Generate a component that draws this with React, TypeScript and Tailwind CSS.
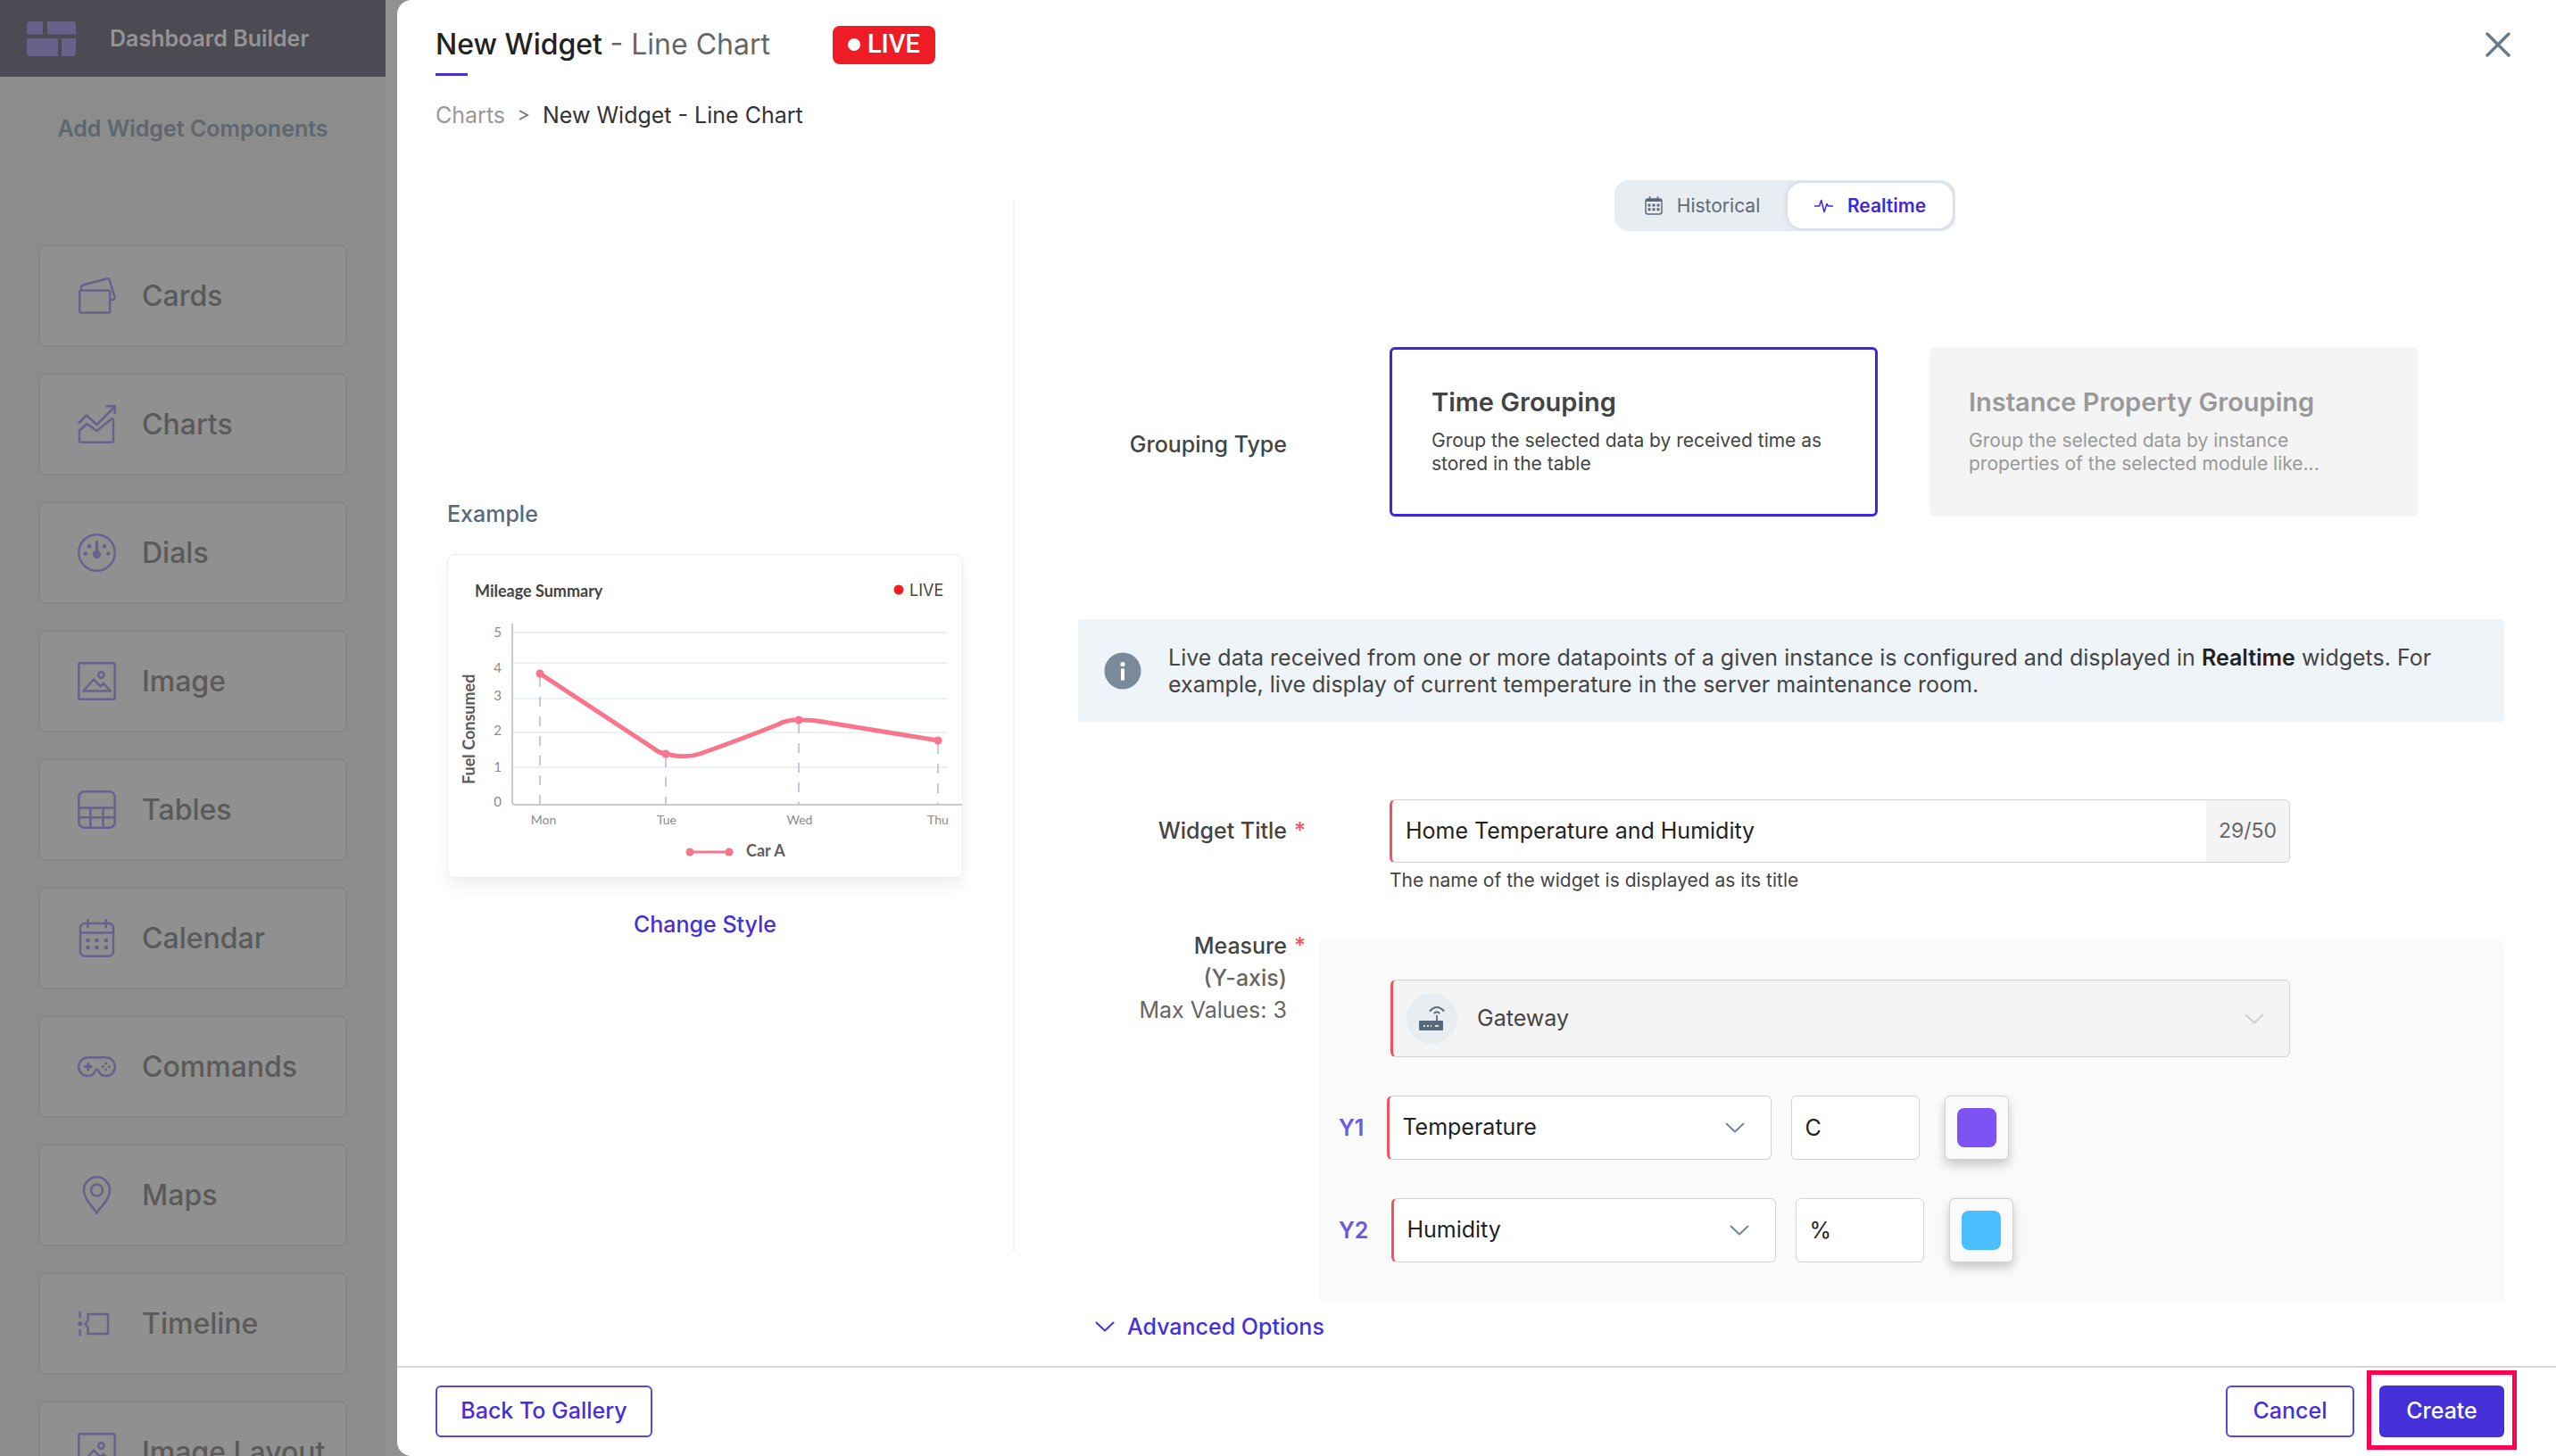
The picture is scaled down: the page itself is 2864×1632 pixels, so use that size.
import { useState } from 'react';
import type { ReactNode } from 'react';
import clsx from 'clsx';

interface WidgetComponent {
  name: string;
  icon: ReactNode;
}

const imageIcon = (
  <>
    <rect x="1.3" y="1.3" width="40.4" height="40.4" rx="1.5" />
    <circle cx="26.3" cy="14.5" r="3.2" />
    <path d="M6.500 32.500L18 19.500l7.500 7.800L29 24l8 8.500z" />
  </>
);

const widgetComponents: WidgetComponent[] = [
  {
    name: 'Cards',
    icon: (
      <>
        <rect x="2.200" y="15.500" width="34" height="25" rx="2" />
        <path d="M4 15.500v-4.300q0-1.200 1.200-1.500L33.500 2.300q1.700-.4 2 1.200l6 19.500q.3 2-1.500 2.800L36.500 26" />
      </>
    ),
  },
  {
    name: 'Charts',
    icon: (
      <>
        <path d="M1.500 20L10 11.500 21.500 22 41 2.500" />
        <path d="M32.500 1.300h9.200V9" />
        <path d="M2 28.500L10.500 21l11 8L38 15.500q2-1 2 1v24q0 1.200-1.200 1.200H3.200Q2 41.700 2 40.500z" />
      </>
    ),
  },
  {
    name: 'Dials',
    icon: (
      <>
        <circle cx="21.500" cy="21.500" r="20.200" />
        <path d="M21.500 9v12" strokeWidth="3.200" />
        <g fill="currentColor" stroke="none">
          <circle cx="21.500" cy="23.500" r="4.700" />
          <circle cx="8.700" cy="22.500" r="2.200" />
          <circle cx="13" cy="14.300" r="2.200" />
          <circle cx="30" cy="14.300" r="2.200" />
          <circle cx="34.300" cy="22.500" r="2.200" />
        </g>
      </>
    ),
  },
  { name: 'Image', icon: imageIcon },
  {
    name: 'Tables',
    icon: (
      <>
        <rect x="1.300" y="1.300" width="40.400" height="40.400" rx="6" />
        <path d="M1.300 19.500h40.400M1.300 30.300h40.400M14.300 19.500v22M28.500 19.500v22" />
      </>
    ),
  },
  {
    name: 'Calendar',
    icon: (
      <>
        <rect x="3" y="5" width="37" height="36.700" rx="5" />
        <path d="M3 15.500h37M11.400 1.300v8M31.800 1.300v8" />
        <g fill="currentColor" stroke="none">
          <circle cx="11.400" cy="24" r="2.300" />
          <circle cx="21.500" cy="24" r="2.300" />
          <circle cx="31.800" cy="24" r="2.300" />
          <circle cx="11.400" cy="32" r="2.300" />
          <circle cx="21.500" cy="32" r="2.300" />
          <circle cx="31.800" cy="32" r="2.300" />
        </g>
      </>
    ),
  },
  {
    name: 'Commands',
    icon: (
      <>
        <path d="M11.500 11.200h20a10.300 10.300 0 0 1 0 20.900c-6 0-7.300-3.800-8.500-6.300-1-1.800-2-1.800-3 0-1.200 2.500-2.500 6.300-8.500 6.300a10.300 10.300 0 0 1 0-20.900z" />
        <path d="M8.500 21.500h6.600M11.800 18.200v6.600" strokeWidth="3" />
        <g fill="currentColor" stroke="none">
          <circle cx="31.800" cy="18" r="1.500" />
          <circle cx="31.800" cy="25" r="1.500" />
          <circle cx="28.300" cy="21.500" r="1.500" />
          <circle cx="35.300" cy="21.500" r="1.500" />
        </g>
      </>
    ),
  },
  {
    name: 'Maps',
    icon: (
      <>
        <path d="M21.500 41.700C17.500 34.500 7 27 7 16a14.500 14.700 0 0 1 29 0c0 11-10.500 18.500-14.500 25.700z" />
        <circle cx="21.500" cy="16" r="6.500" />
      </>
    ),
  },
  {
    name: 'Timeline',
    icon: (
      <>
        <path d="M2.700 9v5.500M2.700 29v5.500M11.500 11H34v22H11.500v-7L8.500 22l3-4z" />
        <circle cx="2.700" cy="21.700" r="2.500" fill="currentColor" stroke="none" />
      </>
    ),
  },
  { name: 'Image Layout', icon: imageIcon },
];

const Chevron = ({ className }: { className?: string }) => (
  <svg
    viewBox="0 0 22 12"
    className={clsx('h-3 w-[22px]', className)}
    fill="none"
    stroke="currentColor"
    strokeWidth="2"
    strokeLinecap="round"
    strokeLinejoin="round"
  >
    <path d="M1.500 1.500L11 10.500l9.500-9" />
  </svg>
);

const Sidebar = () => (
  <aside className="flex w-[432px] shrink-0 flex-col overflow-hidden bg-[#8c8c8c]">
    <div className="flex h-[86px] shrink-0 items-center gap-[38px] bg-[#4c4b54] px-[30px]">
      <svg viewBox="0 0 55 39" className="h-[39px] w-[55px]" fill="#68618b">
        <path d="M4 0h14v14.500H0V4q0-4 4-4z" />
        <path d="M23 0h28q4 0 4 4v10.500H23z" />
        <path d="M0 19h35v20H4q-4 0-4-4z" />
        <path d="M39 19h16v16q0 4-4 4H39z" />
      </svg>
      <span className="text-[25px] leading-8 font-semibold text-[#949494]">Dashboard Builder</span>
    </div>
    <h2 className="mt-[42px] shrink-0 text-center text-[25px] leading-8 font-semibold text-[#60666d]">
      Add Widget Components
    </h2>
    <ul className="mt-[114px] flex flex-col gap-[29px] px-[43px]">
      {widgetComponents.map(({ name, icon }) => (
        <li
          key={name}
          className="flex h-[115px] shrink-0 items-center gap-[29px] rounded-lg border-2 border-[#858585] bg-[#909090] pl-[42px] whitespace-nowrap"
        >
          <svg
            viewBox="0 0 43 43"
            className="size-[43px] shrink-0 text-[#69618d]"
            fill="none"
            stroke="currentColor"
            strokeWidth="2.500"
            strokeLinecap="round"
            strokeLinejoin="round"
          >
            {icon}
          </svg>
          <span className="text-[32px] leading-10 font-medium text-[#5a5a5a]">{name}</span>
        </li>
      ))}
    </ul>
  </aside>
);

const gridLines = [87, 121, 161, 199, 238];
const yLabels = [
  { text: '5', y: 92 },
  { text: '4', y: 132 },
  { text: '3', y: 163 },
  { text: '2', y: 202 },
  { text: '1', y: 243 },
  { text: '0', y: 282 },
];
const points = [
  { day: 'Mon', x: 103, y: 133, labelX: 107 },
  { day: 'Tue', x: 244, y: 223, labelX: 245 },
  { day: 'Wed', x: 393, y: 185, labelX: 394 },
  { day: 'Thu', x: 549, y: 208, labelX: 549 },
];

const MileageChart = () => (
  <svg viewBox="0 0 576 361" className="w-full font-[Lato,sans-serif]">
    <text x="30" y="47" fontSize="18" fontWeight="700" fill="#444">
      Mileage Summary
    </text>
    <circle cx="505" cy="39" r="5.500" fill="#ee1c25" />
    <text x="517" y="46" fontSize="18" fill="#444" className="font-[Inter,sans-serif]">
      LIVE
    </text>
    {gridLines.map((y) => (
      <path key={y} d={`M73 ${y}h487`} stroke="#ecf1f5" strokeWidth="2" />
    ))}
    <path d="M72 77v200q0 3 3 3h501" fill="none" stroke="#c3cad8" strokeWidth="2" />
    {yLabels.map(({ text, y }) => (
      <text key={text} x="60" y={y} fontSize="15" textAnchor="end" fill="#8c8c8c">
        {text}
      </text>
    ))}
    {points.map(({ day, x, y, labelX }) => (
      <g key={day}>
        <path d={`M${x} ${y + 4}V280`} stroke="#c3cad8" strokeWidth="2" strokeDasharray="11 11" />
        <circle cx={x} cy={y} r="4.500" fill="#f8758b" />
        <text x={labelX} y="302" fontSize="14" textAnchor="middle" fill="#8c8c8c">
          {day}
        </text>
      </g>
    ))}
    <path
      d="M103 133L229 216q8 7 20 8 18 4 33-1 40-14 88-33 10-6 28-5 12 0 28 3L549 208"
      fill="none"
      stroke="#f8758b"
      strokeWidth="5"
      strokeLinecap="round"
    />
    <text x="-257" y="30" fontSize="18" fontWeight="700" fill="#5a5a5a" transform="rotate(-90)">
      Fuel Consumed
    </text>
    <path d="M271 333h44" stroke="#f8758b" strokeWidth="3" />
    <circle cx="271" cy="333" r="4.500" fill="#f8758b" />
    <circle cx="315" cy="333" r="4.500" fill="#f8758b" />
    <text x="334" y="338" fontSize="18" fontWeight="700" fill="#5f5f5f">
      Car A
    </text>
  </svg>
);

const Example = () => (
  <section className="mt-20 mb-[129px] flex w-[692px] shrink-0 flex-col justify-center border-r-2 border-[#efefef] pr-14 pb-4 pl-14">
    <h2 className="text-[25px] leading-8 font-medium text-[#5a6877]">Example</h2>
    <div className="mt-[29px] overflow-hidden rounded-lg border border-[#e9eef4] bg-white shadow-[0_10px_16px_rgba(0,0,0,0.06)]">
      <MileageChart />
    </div>
    <a href="#style" className="mt-9 self-center text-[25px] leading-8 font-medium text-[#4630d9]">
      Change Style
    </a>
  </section>
);

const ModeToggle = () => {
  const [mode, setMode] = useState('Realtime');
  const base = 'flex h-[51px] cursor-pointer items-center justify-center gap-4 rounded-2xl text-[21px] leading-7';
  const active = 'bg-white font-semibold text-[#4226dc] shadow-[0_0_6px_rgba(120,140,180,0.35)]';
  return (
    <div className="mr-3.5 flex self-center overflow-hidden rounded-2xl bg-[#e8edf2] p-[3px]">
      <button
        type="button"
        aria-pressed={mode === 'Historical'}
        onClick={() => setMode('Historical')}
        className={clsx(base, 'w-[191px]', mode === 'Historical' ? active : 'text-[#5c6a7a]')}
      >
        <svg viewBox="0 0 20 21" className="h-[21px] w-5" fill="none" stroke="currentColor" strokeWidth="1.500">
          <rect x="1" y="3" width="18" height="17" rx="2.500" />
          <path d="M1.500 4.500h17" strokeWidth="3" />
          <path d="M5.500 0v3M14.500 0v3" />
          <path d="M3.500 10h13M3.500 14.700h13" strokeWidth="3" strokeDasharray="3 2" />
        </svg>
        Historical
      </button>
      <button
        type="button"
        aria-pressed={mode === 'Realtime'}
        onClick={() => setMode('Realtime')}
        className={clsx(base, 'w-[185px]', mode === 'Realtime' ? active : 'text-[#5c6a7a]')}
      >
        <svg viewBox="0 0 21 16" className="h-4 w-[21px]" fill="none" stroke="currentColor" strokeWidth="1.500" strokeLinejoin="round">
          <path d="M0 8h5.500L7.700 1.500 11 14.500 14 5.500 15.500 8H21" />
        </svg>
        Realtime
      </button>
    </div>
  );
};

const Required = () => <span className="inline-block w-9 pl-2 text-left font-medium text-[#f5525e]">*</span>;

interface SeriesRowProps {
  label: string;
  value: string;
  unit: string;
  swatch: string;
}

const SeriesRow: React.FC<SeriesRowProps> = ({ label, value, unit, swatch }) => (
  <div className="flex items-center pl-[22px]">
    <label htmlFor={label} className="text-[25px] leading-8 font-semibold text-[#6b59e2]">
      {label}
    </label>
    <div className="relative ml-[26px]">
      <select
        id={label}
        defaultValue={value}
        className="h-[72px] w-[431px] appearance-none rounded-md border border-l-[3px] border-[#d3d3d3] border-l-[#f5525e] bg-white pl-[14px] text-[25px] text-[#222]"
      >
        <option>{value}</option>
      </select>
      <Chevron className="pointer-events-none absolute top-[30px] right-[30px] text-[#74869a]" />
    </div>
    <input
      aria-label={`${label} unit`}
      defaultValue={unit}
      className="ml-[22px] h-[72px] w-36 rounded-md border border-[#d3d3d3] bg-white px-[14px] text-[25px] text-[#222]"
    />
    <button
      type="button"
      aria-label={`${label} colour`}
      className="ml-7 flex size-[72px] items-center justify-center rounded-md border border-[#d0d0d0] bg-[#fafafa] shadow-[0_6px_12px_rgba(0,0,0,0.2)]"
    >
      <span className={clsx('size-11 rounded-lg', swatch)} />
    </button>
  </div>
);

const WidgetForm = () => (
  <form className="flex min-w-0 flex-1 flex-col pt-[57px] pr-[58px] pl-[71px]">
    <ModeToggle />

    {/* Grouping */}
    <div className="mt-[130px] flex">
      <span className="w-[270px] shrink-0 pt-[93px] pr-9 text-right text-[25px] leading-8 font-medium text-[#444]">
        Grouping Type
      </span>
      <div className="flex gap-[58px] pl-[79px]">
        <button
          type="button"
          className="flex h-[190px] w-[547px] flex-col items-start rounded-md border-3 border-[#3f26dc] px-11 pt-[41px] text-left text-[#444]"
        >
          <span className="text-[29px] leading-9 font-semibold">Time Grouping</span>
          <span className="mt-3 text-[21px] leading-[26px]">
            Group the selected data by received time as stored in the table
          </span>
        </button>
        <button
          type="button"
          className="flex h-[190px] w-[547px] flex-col items-start rounded-md bg-[#f4f4f4] px-11 pt-11 text-left text-[#999]"
        >
          <span className="text-[29px] leading-9 font-semibold">Instance Property Grouping</span>
          <span className="mt-3 text-[21px] leading-[26px]">
            Group the selected data by instance properties of the selected module like...
          </span>
        </button>
      </div>
    </div>

    {/* Info banner */}
    <div className="mt-[115px] flex h-[115px] shrink-0 items-center gap-[30px] rounded-sm bg-[#eff4f9] pr-12 pl-[29px]">
      <svg viewBox="0 0 42 42" className="size-[42px] shrink-0">
        <circle cx="21" cy="21" r="20.500" fill="#7b8a9b" />
        <circle cx="21" cy="13.500" r="2.600" fill="#fff" />
        <path d="M21 18.500v13" stroke="#fff" strokeWidth="4" />
      </svg>
      <p className="text-[25px] leading-[30px] text-[#444]">
        Live data received from one or more datapoints of a given instance is configured and displayed in{' '}
        <b className="font-semibold text-[#222]">Realtime</b> widgets. For example, live display of current temperature
        in the server maintenance room.
      </p>
    </div>

    {/* Title */}
    <div className="mt-[87px] flex">
      <label
        htmlFor="title"
        className="w-[270px] shrink-0 pt-[19px] text-right text-[25px] leading-8 font-medium text-[#444]"
      >
        Widget Title
        <Required />
      </label>
      <div className="pl-[79px]">
        <div className="flex h-[71px] w-[1009px] overflow-hidden rounded-md border border-l-[3px] border-[#d3d3d3] border-l-[#f5525e]">
          <input
            id="title"
            defaultValue="Home Temperature and Humidity"
            className="min-w-0 flex-1 px-[15px] text-[25px] text-[#222]"
          />
          <span className="flex w-[93px] items-center justify-center bg-[#f4f4f4] text-[23px] text-[#666]">29/50</span>
        </div>
        <p className="mt-1.5 text-[21px] leading-7 text-[#444]">The name of the widget is displayed as its title</p>
      </div>
    </div>

    {/* Measure */}
    <div className="mt-[53px] flex">
      <div className="-mt-3 w-[270px] shrink-0 text-right text-[25px] leading-9 text-[#666]">
        <label htmlFor="source" className="font-medium text-[#444]">
          Measure
          <Required />
        </label>
        <p className="pr-9 font-medium">(Y-axis)</p>
        <p className="pr-9">Max Values: 3</p>
      </div>
      <div className="flex flex-1 flex-col gap-[43px] rounded-md bg-[#fafafa] py-11">
        <div className="relative ml-20 w-[1008px]">
          <select
            id="source"
            disabled
            className="h-[87px] w-full appearance-none rounded-md border border-l-[3px] border-[#d3d3d3] border-l-[#f5525e] bg-[#f4f4f4] pl-[94px] text-[25px] text-[#444] opacity-100"
          >
            <option>Gateway</option>
          </select>
          <svg viewBox="0 0 57 57" className="pointer-events-none absolute top-[15px] left-[18px] size-[57px]">
            <circle cx="28.500" cy="28.500" r="28.500" fill="#e8edf2" />
            <rect x="14" y="31" width="27" height="11" rx="1" fill="#5a687b" />
            <path d="M34 25v7" stroke="#5a687b" strokeWidth="1.800" />
            <path d="M19 37h9" stroke="#e8edf2" strokeWidth="1.800" strokeDasharray="1.800 2.200" />
            <path d="M32 37h4" stroke="#e8edf2" strokeWidth="1.800" />
            <path d="M26 20.500q8-9 16 0M31 23q3-3.500 6 0" fill="none" stroke="#5a687b" strokeWidth="2.200" />
          </svg>
          <Chevron className="pointer-events-none absolute top-[38px] right-[29px] text-[#cfcfcf]" />
        </div>
        <SeriesRow label="Y1" value="Temperature" unit="C" swatch="bg-[#7e53f3]" />
        <SeriesRow label="Y2" value="Humidity" unit="%" swatch="bg-[#4abeff]" />
      </div>
    </div>

    <button
      type="button"
      className="mt-3 ml-[19px] flex items-center gap-3.5 self-start text-[25px] leading-8 font-medium text-[#4630d9]"
    >
      <Chevron />
      Advanced Options
    </button>
  </form>
);

const App: React.FC = () => {
  return (
    <div className="flex h-screen overflow-hidden bg-[#929292] font-[Inter,sans-serif]">
      <Sidebar />
      <main className="ml-[13px] flex min-w-0 flex-1 flex-col overflow-hidden rounded-l-2xl bg-white">
        {/* Header */}
        <header className="flex items-start justify-between pt-[30px] pr-[50px] pl-[43px]">
          <div>
            <div className="flex h-10 items-center gap-[70px]">
              <h1 className="text-[32px] leading-10 font-medium text-[#222]">
                New Widget <span className="font-normal text-[#666]">- Line Chart</span>
              </h1>
              <span className="flex h-[43px] items-center gap-2 rounded-lg bg-[#ee1c25] px-[17px] font-[Roboto,sans-serif] text-[29px] font-medium text-white">
                <i className="size-[14px] rounded-full bg-white" />
                LIVE
              </span>
            </div>
            <div className="mt-3 h-[3px] w-9 bg-[#4630d9]" />
            <nav className="mt-7 flex gap-[15px] text-[25px] leading-8">
              <a href="#charts" className="text-[#999]">
                Charts
              </a>
              <svg viewBox="0 0 12 12" className="size-3 self-center" fill="none" stroke="#777" strokeWidth="2">
                <path d="M1 1l9 5-9 5" />
              </svg>
              <span className="text-[#333]">New Widget - Line Chart</span>
            </nav>
          </div>
          <button type="button" aria-label="Close" className="mt-[5px] text-[#6c7b8c]">
            <svg viewBox="0 0 30 30" className="size-[30px]" fill="none" stroke="currentColor" strokeWidth="3.500" strokeLinecap="round">
              <path d="M3 3l24 24M27 3L3 27" />
            </svg>
          </button>
        </header>

        <div className="flex min-h-0 flex-1 overflow-y-auto">
          <Example />
          <WidgetForm />
        </div>

        {/* Footer */}
        <footer className="flex shrink-0 items-center border-t-2 border-[#d6d6d6] pt-5 pr-[58px] pb-[21px] pl-[43px] text-[25px] font-medium">
          <button type="button" className="h-[58px] w-[243px] rounded-md border-2 border-[#5a45dd] text-[#4630d9]">
            Back To Gallery
          </button>
          <button
            type="button"
            className="mr-7 ml-auto h-[58px] w-36 rounded-md border-2 border-[#5a45dd] text-[#4630d9]"
          >
            Cancel
          </button>
          <div className="relative">
            <button type="button" className="h-[58px] w-[140px] rounded-md bg-[#4630d9] text-white">
              Create
            </button>
            <span className="pointer-events-none absolute -inset-x-3.5 -top-[17px] -bottom-3.5 border-5 border-[#ff0050]" />
          </div>
        </footer>
      </main>
    </div>
  );
};

export default App;
